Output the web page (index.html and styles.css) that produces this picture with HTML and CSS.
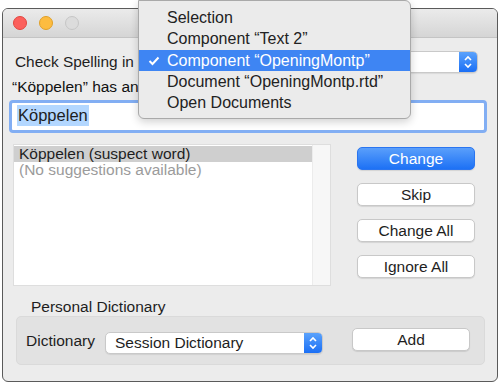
FILE: index.html
```html
<!DOCTYPE html>
<html lang="en">

<head>
    <meta charset="UTF-8">
    <title>Spelling</title>
    <link rel="stylesheet" href="styles.css">
</head>

<body>
    <div class="window">
        <div class="titlebar">
            <span class="light red"></span>
            <span class="light yellow"></span>
            <span class="light grey"></span>
        </div>
        <div class="content">
            <div class="spell-row">
                <span class="label">Check Spelling in</span>
                <div class="popup wide">
                    <span class="popup-text"></span>
                    <span class="stepper">
                        <svg width="10" height="14" viewBox="0 0 10 14"><polyline points="2,5 5,2 8,5" /><polyline points="2,9 5,12 8,9" /></svg>
                    </span>
                </div>
            </div>
            <div class="unknown">“Köppelen” has an unrecognized spelling.</div>
            <div class="field"><span class="sel">Köppelen</span></div>
            <div class="main">
                <div class="list">
                    <div class="rows">
                        <div class="row current">Köppelen (suspect word)</div>
                        <div class="row dim">(No suggestions available)</div>
                    </div>
                    <div class="scroller"></div>
                </div>
                <div class="buttons">
                    <div class="btn primary">Change</div>
                    <div class="btn">Skip</div>
                    <div class="btn">Change All</div>
                    <div class="btn">Ignore All</div>
                </div>
            </div>
            <div class="group-title">Personal Dictionary</div>
            <div class="group">
                <span class="label">Dictionary</span>
                <div class="popup dict">
                    <span class="popup-text">Session Dictionary</span>
                    <span class="stepper">
                        <svg width="10" height="14" viewBox="0 0 10 14"><polyline points="2,5 5,2 8,5" /><polyline points="2,9 5,12 8,9" /></svg>
                    </span>
                </div>
                <div class="btn add">Add</div>
            </div>
        </div>
        <ul class="menu">
            <li>Selection</li>
            <li>Component “Text 2”</li>
            <li class="on">
                <svg class="check" width="12" height="10" viewBox="0 0 12 10"><polyline points="1.5,5 4.5,8 10.5,1.5" /></svg>
                Component “OpeningMontp”
            </li>
            <li>Document “OpeningMontp.rtd”</li>
            <li>Open Documents</li>
        </ul>
    </div>
</body>

</html>
```

FILE: styles.css
```css
* {
    box-sizing: border-box;
}

body {
    margin: 0;
    background: #ffffff;
    font-family: "Liberation Sans", Arial, sans-serif;
    font-size: 15.5px;
    color: #1e1e1e;
}

.window {
    position: relative;
    width: 496px;
    height: 374px;
    margin: 8px 0 0 2px;
    border: 1px solid #5a5a5a;
    border-radius: 6px;
    background: #ececec;
}

.titlebar {
    height: 29px;
    display: flex;
    align-items: center;
    gap: 12px;
    padding-left: 10px;
    border-radius: 5px 5px 0 0;
    border-bottom: 1px solid #c4c4c4;
    background: linear-gradient(#ebebeb, #d5d5d5);
}

.light {
    width: 14px;
    height: 14px;
    border-radius: 50%;
}

.red {
    background: #fc605c;
    border: 1px solid #e2463f;
}

.yellow {
    background: #fdbc40;
    border: 1px solid #e0a028;
}

.grey {
    background: #dcdcdc;
    border: 1px solid #c6c6c6;
}

.content {
    display: flex;
    flex-direction: column;
}

.spell-row {
    display: flex;
    align-items: center;
    height: 22px;
    margin: 13px 19px 0 12px;
    gap: 14px;
    font-size: 15.4px;
}

.popup {
    display: flex;
    height: 22px;
    background: #ffffff;
    border: 1px solid #c9c9c9;
    border-radius: 5px;
    box-shadow: 0 1px 1px rgba(0, 0, 0, 0.08);
    overflow: hidden;
}

.popup.wide {
    flex: 1;
}

.popup-text {
    flex: 1;
    padding-left: 9px;
    line-height: 20px;
}

.stepper {
    width: 18px;
    display: flex;
    align-items: center;
    justify-content: center;
    background: linear-gradient(#5aa2fc, #1b6ff5);
}

.stepper polyline {
    fill: none;
    stroke: #ffffff;
    stroke-width: 1.6;
}

.unknown {
    margin: 5px 0 0 9px;
    height: 18px;
    line-height: 18px;
    color: #111111;
    white-space: nowrap;
}

.field {
    margin: 4px 10px 0 6px;
    height: 33px;
    border: 3px solid #82aef3;
    border-radius: 4px;
    background: #ffffff;
    padding: 2px 0 0 5px;
    font-size: 16.5px;
}

.sel {
    display: inline-block;
    background: #b3d7ff;
    line-height: 21px;
    padding: 0 1px;
}

.main {
    display: flex;
    margin: 11px 0 0 10px;
}

.list {
    width: 318px;
    height: 142px;
    display: flex;
    background: #ffffff;
    border: 1px solid #dedede;
}

.rows {
    flex: 1;
    padding-top: 1px;
}

.row {
    height: 16px;
    line-height: 16px;
    padding-left: 5px;
}

.row.current {
    background: #cfcfcf;
}

.row.dim {
    color: #9b9b9b;
}

.scroller {
    width: 18px;
    background: #f7f7f7;
    border-left: 1px solid #ececec;
}

.buttons {
    display: flex;
    flex-direction: column;
    gap: 13px;
    margin: 3px 0 0 26px;
}

.btn {
    width: 118px;
    height: 23px;
    line-height: 21px;
    text-align: center;
    font-size: 15.5px;
    background: #ffffff;
    border: 1px solid #c8c8c8;
    border-radius: 5px;
    box-shadow: 0 1px 1px rgba(0, 0, 0, 0.1);
}

.btn.primary {
    color: #ffffff;
    border-color: #2a75f0;
    background: linear-gradient(#5a9ffb, #1d71f5);
}

.group-title {
    margin: 12px 0 0 28px;
    height: 18px;
    line-height: 18px;
}

.group {
    display: flex;
    align-items: center;
    height: 49px;
    margin: 0 12px 0 13px;
    padding-left: 9px;
    background: #e2e2e2;
    border: 1px solid #dadada;
    border-radius: 5px;
}

.group .label {
    width: 79px;
}

.popup.dict {
    width: 218px;
    margin-top: 4px;
}

.btn.add {
    margin: 0 0 3px 29px;
}

.menu {
    position: absolute;
    left: 135px;
    top: -9px;
    width: 273px;
    margin: 0;
    padding: 6px 0 5px;
    list-style: none;
    background: #ebebeb;
    border: 1px solid #a9a9a9;
    border-radius: 0 6px 6px 6px;
    box-shadow: 0 3px 8px rgba(0, 0, 0, 0.18);
}

.menu li {
    position: relative;
    height: 21.3px;
    line-height: 21px;
    padding-left: 28px;
    font-size: 16px;
    color: #222222;
}

.menu li.on {
    background: #3e85f3;
    color: #ffffff;
}

.check {
    position: absolute;
    left: 9px;
    top: 6px;
}

.check polyline {
    fill: none;
    stroke: #ffffff;
    stroke-width: 2;
}
```
